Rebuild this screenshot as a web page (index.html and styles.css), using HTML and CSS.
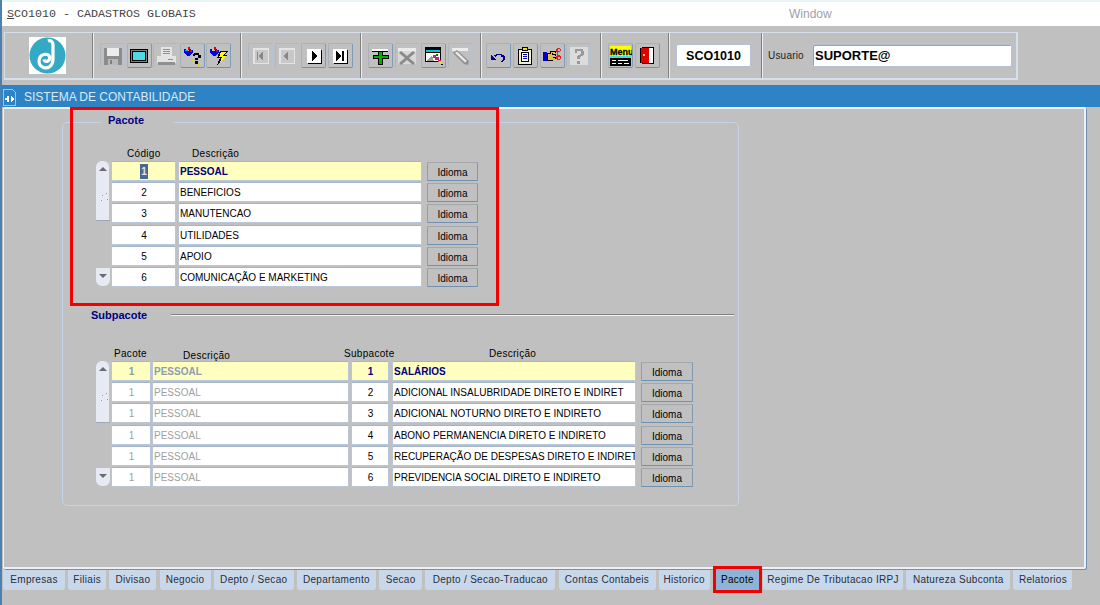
FILE: index.html
```html
<!DOCTYPE html>
<html lang="en">
<head>
    <meta charset="UTF-8">
    <title>SCO1010 - CADASTROS GLOBAIS</title>
    <link rel="stylesheet" href="styles.css">
</head>
<body>

<div class="titlebar">
    <span class="titlebar-text"><u>S</u>CO1010 - CADASTROS GLOBAIS</span>
    <span class="titlebar-menu">Window</span>
</div>

<div class="toolbar">
    <div class="tb-group tb-logo">
        <svg width="37" height="37" viewBox="0 0 37 37">
            <rect width="37" height="37" fill="#fff"/>
            <circle cx="18.5" cy="18.5" r="18" fill="#33a9c4"/>
            <path d="M19 4 C21 3 24 4 24 8 L24 22 C24 29 19 32 14.500 30.500 C8 28 9 19 15 17.500 C19 16.500 21.500 19 20.500 22 C19.500 25 15.500 25 15 22.500" fill="none" stroke="#fff" stroke-width="3.200"/>
        </svg>
    </div>

    <!-- save, screen, print, query -->
    <div class="tb-group tb-save">
        <div class="tb-btn off"><svg width="20" height="20" viewBox="0 0 20 20" shape-rendering="crispEdges"><rect x="1" y="2" width="18" height="17" fill="#8c8c8c"/><rect x="4" y="2" width="12" height="8" fill="#ececec"/><rect x="5" y="13" width="10" height="6" fill="#b8b8b8"/><rect x="7" y="14" width="2" height="4" fill="#808080"/></svg></div>
        <div class="tb-btn"><svg width="20" height="20" viewBox="0 0 20 20" shape-rendering="crispEdges"><rect x="1" y="3" width="18" height="14" fill="#000"/><rect x="2" y="4" width="16" height="12" fill="#808080"/><rect x="3" y="5" width="14" height="10" fill="#000"/><rect x="4" y="6" width="12" height="8" fill="#4fd8e8"/></svg></div>
        <div class="tb-btn off"><svg width="20" height="20" viewBox="0 0 20 20" shape-rendering="crispEdges"><rect x="5" y="1" width="11" height="9" fill="#e4e4e4"/><path d="M7 3h7v1H7zM7 5h7v1H7zM7 7h7v1H7z" fill="#909090"/><rect x="1" y="10" width="19" height="7" fill="#e4e4e4"/><rect x="2" y="16" width="17" height="3" fill="#909090"/><rect x="12" y="13" width="5" height="1" fill="#909090"/></svg></div>
        <div class="tb-btn"><svg width="20" height="20" viewBox="0 0 20 20" shape-rendering="crispEdges"><path d="M2 3h2v2h3V3h2v1h2v2l-4 4H5L2 6z" fill="#0000e0"/><path d="M6 1h2v3H6zM8 4h2v2H8z" fill="#e00000"/><path d="M3 4h3v1H3z" fill="#00b0d0"/><path d="M12 7h5v2h2v3h-3v2h-3v-2h3V9h-3v1h-2V8h1zM13 15h3v3h-3z" fill="#000"/><path d="M10 11h1v1h-1zM10 14h1v1h-1zM11 17h1v1h-1zM17 15h1v1h-1zM18 13h1v1h-1zM16 18h1v1h-1zM18 17h1v1h-1zM9 16h1v1H9z" fill="#f0e000"/></svg></div>
        <div class="tb-btn"><svg width="20" height="20" viewBox="0 0 20 20" shape-rendering="crispEdges"><path d="M1 3h2v2h3V3h2v1h2v2L6 10H4L1 6z" fill="#0000e0"/><path d="M5 1h2v3H5zM7 4h2v2H7z" fill="#e00000"/><path d="M11 5h8l-3 4h3L8 19l3-7H8z" fill="#000"/><path d="M12 6h5l-3 4h3l-6 6 2-5H10z" fill="#ffff00"/></svg></div>
    </div>

    <!-- record navigation -->
    <div class="tb-group tb-a">
        <div class="tb-btn off"><svg width="20" height="20" viewBox="0 0 20 20" shape-rendering="crispEdges"><rect x="2" y="2" width="16" height="16" fill="#e4e4e4"/><rect x="4" y="4" width="13" height="13" fill="#c8c8c8"/><path d="M6 6h1v8H6zM12 6v8h-1v-1h-1v-1H9v-1H8V9h1V8h1V7h1V6z" fill="#888"/></svg></div>
        <div class="tb-btn off"><svg width="20" height="20" viewBox="0 0 20 20" shape-rendering="crispEdges"><rect x="2" y="2" width="16" height="16" fill="#e4e4e4"/><rect x="4" y="4" width="13" height="13" fill="#c8c8c8"/><path d="M11 6v8h-1v-1H9v-1H8v-1H7V9h1V8h1V7h1V6z" fill="#888"/></svg></div>
        <div class="tb-btn"><svg width="20" height="20" viewBox="0 0 20 20" shape-rendering="crispEdges"><rect x="4" y="4" width="14" height="14" fill="#000"/><rect x="3" y="3" width="14" height="14" fill="#fff"/><path d="M8 5v10h1v-1h1v-1h1v-1h1v-1h1V9h-1V8h-1V7h-1V6H9V5z" fill="#000"/></svg></div>
        <div class="tb-btn"><svg width="20" height="20" viewBox="0 0 20 20" shape-rendering="crispEdges"><rect x="4" y="4" width="14" height="14" fill="#000"/><rect x="3" y="3" width="14" height="14" fill="#fff"/><path d="M6 5v10h1v-1h1v-1h1v-1h1v-1h1V9h-1V8H9V7H8V6H7V5zM12 5h2v10h-2z" fill="#000"/></svg></div>
    </div>

    <!-- insert, delete, clear, edit -->
    <div class="tb-group tb-a">
        <div class="tb-btn"><svg width="20" height="20" viewBox="0 0 20 20" shape-rendering="crispEdges"><rect x="1" y="3" width="16" height="2" fill="#fff"/><rect x="1" y="5" width="16" height="1" fill="#000"/><path d="M7 5h5v4h6v4h-6v6H7v-6H2V9h5z" fill="#000"/><path d="M8 6h3v4h6v2h-6v6H8v-6H3v-2h5z" fill="#00b000"/></svg></div>
        <div class="tb-btn off"><svg width="20" height="20" viewBox="0 0 20 20"><rect x="1" y="2" width="18" height="3" fill="#ececec" shape-rendering="crispEdges"/><rect x="1" y="5" width="18" height="13" fill="#d8d8d8" shape-rendering="crispEdges"/><path d="M4 5 L10 10 L16 5 L18 7 L12 12 L18 17 L16 19 L10 14 L4 19 L2 17 L8 12 L2 7 z" fill="#8a8a8a"/></svg></div>
        <div class="tb-btn"><svg width="20" height="20" viewBox="0 0 20 20" shape-rendering="crispEdges"><rect x="1" y="1" width="16" height="15" fill="#000"/><rect x="2" y="4" width="14" height="2" fill="#00c8d8"/><rect x="2" y="7" width="14" height="8" fill="#fff"/><path d="M3 15l5-6 2 6z" fill="#a0a0a0"/><path d="M9 9h3v2h3v3h2v2h-3v-2h-3v-2H9z" fill="#d02070"/><path d="M12 8h2v2h-2z" fill="#008000"/><path d="M15 15h3v3h-3z" fill="#f0e000"/><path d="M17 18h2v1h-2z" fill="#000"/></svg></div>
        <div class="tb-btn off"><svg width="20" height="20" viewBox="0 0 20 20"><rect x="2" y="2" width="16" height="3" fill="#ececec" shape-rendering="crispEdges"/><path d="M3 7 L7 4 L19 15 L18 19 L14 18 z" fill="#909090"/><path d="M5 7 L7 5.500 L17 15 L15 16.500 z" fill="#e8e8e8"/></svg></div>
    </div>

    <!-- undo, list, hand, help -->
    <div class="tb-group tb-c">
        <div class="tb-btn"><svg width="20" height="20" viewBox="0 0 20 20" shape-rendering="crispEdges"><path d="M2 14v-5h1v1h1v1h1v1h1v1h1v1z" fill="#000090"/><path d="M5 9h2V8h6v1h2v1h1v4h-1v1h-1v1h-2v-1h1v-1h1v-3h-2V9H8v1H7v1H6v-1H5z" fill="#000090"/></svg></div>
        <div class="tb-btn"><svg width="20" height="20" viewBox="0 0 20 20" shape-rendering="crispEdges"><rect x="3" y="3" width="14" height="16" fill="#000"/><rect x="4" y="4" width="12" height="14" fill="#f0f0d0"/><rect x="7" y="1" width="6" height="4" fill="#000"/><rect x="8" y="2" width="4" height="2" fill="#f0e000"/><rect x="6" y="6" width="8" height="10" fill="#000"/><rect x="7" y="7" width="6" height="8" fill="#fff"/><path d="M8 8h4v1H8zM8 10h4v1H8zM8 12h4v1H8z" fill="#0000c0"/></svg></div>
        <div class="tb-btn"><svg width="20" height="20" viewBox="0 0 20 20" shape-rendering="crispEdges"><rect x="1" y="6" width="4" height="9" fill="#0000c0"/><path d="M5 7h3V5h6v2h-3v1h3v2h-3v1h3v2h-3v2H5z" fill="#000"/><path d="M6 8h3V6h4v1h-3v2h3v1h-2v2h2v1h-2v1H6z" fill="#e8c040"/><path d="M15 2h3v1h1v2h-1v1h-2v3h2v1h1v3h-1v1h-3v-1h-1v-3h1V6h-1V3h1zM16 3v2h2V3zM16 11v2h2v-2z" fill="#e02020"/></svg></div>
        <div class="tb-btn off"><svg width="20" height="20" viewBox="0 0 20 20" shape-rendering="crispEdges"><rect x="1" y="1" width="18" height="18" fill="#dcdcdc"/><path d="M6 3h8v2h1v4h-1v1h-2v1h-1v2H8v-3h1V9h2V8h1V5H8v2H6V5h0zM8 15h3v3H8z" fill="#999"/></svg></div>
    </div>

    <!-- menu, exit -->
    <div class="tb-group tb-d">
        <div class="tb-btn"><svg width="22" height="22" viewBox="0 0 22 22"><rect x="0" y="1" width="21" height="10" fill="#ffff00"/><text x="0" y="9.500" class="icon-menu-text">Menu</text><rect x="0" y="11" width="21" height="2" fill="#40e0e0" shape-rendering="crispEdges"/><rect x="0" y="13" width="21" height="8" fill="#000" shape-rendering="crispEdges"/><path d="M2 15h4v1H2zM8 15h10v1H8zM2 18h4v1H2zM8 18h4v1H8zM14 18h5v1h-5z" fill="#fff" shape-rendering="crispEdges"/></svg></div>
        <div class="tb-btn"><svg width="20" height="20" viewBox="0 0 20 20" shape-rendering="crispEdges"><rect x="5" y="1" width="12" height="17" fill="#000"/><rect x="12" y="2" width="4" height="15" fill="#fff"/><rect x="3" y="2" width="9" height="15" fill="#e00000"/><rect x="6" y="8" width="2" height="2" fill="#ffff00"/><path d="M3 2h1v15H3z" fill="#000"/></svg></div>
    </div>

    <div class="tb-group tb-form">
        <div class="tb-field tb-field-form">SCO1010</div>
    </div>
    <div class="tb-group tb-user">
        <span class="tb-label">Usuario</span>
        <div class="tb-field tb-field-user">SUPORTE@</div>
    </div>
</div>

<div class="window-title">
    <svg class="window-icon" width="16" height="18" viewBox="0 0 16 18" shape-rendering="crispEdges">
        <path d="M1 1h9l3 3v13H1z" fill="#2e83c4" stroke="#9cc4e4"/>
        <path d="M5 8h2v6H5zM3 10h2v2H3zM9 8h1v6H9zM10 9h1v4h-1zM11 10h1v2h-1z" fill="#fff"/>
    </svg>
    <span>SISTEMA DE CONTABILIDADE</span>
</div>

<div class="panel">
    <div class="mark"></div>

    <div class="frame">
        <div class="legend legend-pacote">Pacote</div>

        <div class="head head-pacote">
            <span class="h-codigo">Código</span>
            <span class="h-descricao">Descrição</span>
        </div>
        <div class="block">
            <div class="scroll">
                <div class="scroll-thumb"><span class="arrow-up"></span><span class="grip"></span></div>
                <div class="scroll-down"><span class="arrow-down"></span></div>
            </div>
            <div class="rows">
                <div class="row"><div class="field code current"><span class="sel">1</span></div><div class="field desc current">PESSOAL</div><div class="idioma">Idioma</div></div>
                <div class="row"><div class="field code">2</div><div class="field desc">BENEFICIOS</div><div class="idioma">Idioma</div></div>
                <div class="row"><div class="field code">3</div><div class="field desc">MANUTENCAO</div><div class="idioma">Idioma</div></div>
                <div class="row"><div class="field code">4</div><div class="field desc">UTILIDADES</div><div class="idioma">Idioma</div></div>
                <div class="row"><div class="field code">5</div><div class="field desc">APOIO</div><div class="idioma">Idioma</div></div>
                <div class="row"><div class="field code">6</div><div class="field desc">COMUNICAÇÃO E MARKETING</div><div class="idioma">Idioma</div></div>
            </div>
        </div>

        <div class="sub-title">
            <span class="legend-sub">Subpacote</span>
            <span class="sub-line"></span>
        </div>

        <div class="head head-sub">
            <span class="h-pacote">Pacote</span>
            <span class="h-desc-a">Descrição</span>
            <span class="h-sub">Subpacote</span>
            <span class="h-desc-b">Descrição</span>
        </div>
        <div class="block">
            <div class="scroll">
                <div class="scroll-thumb thumb-sub"><span class="arrow-up"></span><span class="grip"></span></div>
                <div class="scroll-down"><span class="arrow-down"></span></div>
            </div>
            <div class="rows">
                <div class="row"><div class="field pac current ro">1</div><div class="field desc-a current ro">PESSOAL</div><div class="field sub current">1</div><div class="field desc-b current">SALÁRIOS</div><div class="idioma idioma-sub">Idioma</div></div>
                <div class="row"><div class="field pac ro">1</div><div class="field desc-a ro">PESSOAL</div><div class="field sub">2</div><div class="field desc-b">ADICIONAL INSALUBRIDADE DIRETO E INDIRET</div><div class="idioma idioma-sub">Idioma</div></div>
                <div class="row"><div class="field pac ro">1</div><div class="field desc-a ro">PESSOAL</div><div class="field sub">3</div><div class="field desc-b">ADICIONAL NOTURNO DIRETO E INDIRETO</div><div class="idioma idioma-sub">Idioma</div></div>
                <div class="row"><div class="field pac ro">1</div><div class="field desc-a ro">PESSOAL</div><div class="field sub">4</div><div class="field desc-b">ABONO PERMANENCIA DIRETO E INDIRETO</div><div class="idioma idioma-sub">Idioma</div></div>
                <div class="row"><div class="field pac ro">1</div><div class="field desc-a ro">PESSOAL</div><div class="field sub">5</div><div class="field desc-b">RECUPERAÇÃO DE DESPESAS DIRETO E INDIRET</div><div class="idioma idioma-sub">Idioma</div></div>
                <div class="row"><div class="field pac ro">1</div><div class="field desc-a ro">PESSOAL</div><div class="field sub">6</div><div class="field desc-b">PREVIDENCIA SOCIAL DIRETO E INDIRETO</div><div class="idioma idioma-sub">Idioma</div></div>
            </div>
        </div>
    </div>
</div>

<div class="tabs">
    <div class="tab t-62">Empresas</div>
    <div class="tab t-38">Filiais</div>
    <div class="tab t-47">Divisao</div>
    <div class="tab t-51">Negocio</div>
    <div class="tab t-80">Depto / Secao</div>
    <div class="tab t-79">Departamento</div>
    <div class="tab t-43">Secao</div>
    <div class="tab t-130">Depto / Secao-Traducao</div>
    <div class="tab t-97">Contas Contabeis</div>
    <div class="tab t-51">Historico</div>
    <div class="tab tab-active">Pacote</div>
    <div class="tab t-140">Regime De Tributacao IRPJ</div>
    <div class="tab t-104">Natureza Subconta</div>
    <div class="tab t-59">Relatorios</div>
</div>

</body>
</html>
```

FILE: styles.css
```css
* {
    margin: 0;
    padding: 0;
    box-sizing: border-box;
}

html, body {
    width: 1100px;
    height: 605px;
    overflow: hidden;
}

body {
    position: relative;
    background-color: #c0c0c0;
    border-left: 2px solid #4f7fae;
    font-family: "Liberation Sans", Arial, sans-serif;
    font-size: 10px;
    color: #000;
}

/* title bar */
.titlebar {
    height: 26px;
    margin-left: -2px;
    border-top: 2px solid #e8f5f7;
    background: #fff;
    display: flex;
    align-items: center;
    padding: 0 0 0 7px;
    color: #444;
}

.titlebar-text {
    width: 782px;
    font-family: "Liberation Mono", "Courier New", monospace;
    font-size: 11.670px;
}

.titlebar-menu {
    font-size: 12px;
    color: #a0a0a8;
}

/* toolbar */
.toolbar {
    display: flex;
    width: 1014px;
    height: 48px;
    margin: 6px 0 0 2px;
    border: 1px solid #d6e0ec;
    border-width: 1px 2px 2px 1px;
}

.tb-group {
    display: flex;
    align-items: center;
    height: 100%;
    flex: none;
    padding-left: 7px;
    gap: 1.600px;
    border-right: 1px solid #808080;
    box-shadow: 1px 0 0 #e8eef4;
}

.tb-logo {
    width: 88px;
    padding-left: 24px;
}

.tb-save {
    width: 148px;
}

.tb-a {
    width: 120px;
}

.tb-c {
    width: 120px;
    padding-left: 5px;
    gap: 1.800px;
}

.tb-d {
    width: 68px;
}

.tb-form {
    width: 93px;
}

.tb-user {
    flex: 1;
    padding-left: 6px;
    gap: 0;
    border-right: 0;
    box-shadow: none;
}

.tb-btn {
    width: 25px;
    height: 25px;
    flex: none;
    display: flex;
    align-items: center;
    justify-content: center;
    border: 1px solid;
    border-color: #a8b0b8 #7f9ab4 #6f90b0 #a8b0b8;
    border-radius: 2px;
}

.tb-btn.off {
    border-color: #aeb6be #b4c4d4 #b4c4d4 #aeb6be;
}

.icon-menu-text {
    font-family: "Liberation Sans", Arial, sans-serif;
    font-size: 9px;
    font-weight: bold;
    fill: #000;
    stroke: #000;
    stroke-width: 0.300px;
}

.tb-field {
    height: 23px;
    background: #fff;
    border: 1px solid #b4c2d2;
    border-radius: 2px;
    font-weight: bold;
    display: flex;
    align-items: center;
}

.tb-field-form {
    width: 75px;
    justify-content: center;
    font-size: 12.500px;
}

.tb-label {
    width: 44px;
    font-size: 10px;
    letter-spacing: 0.200px;
    color: #222;
}

.tb-field-user {
    width: 200px;
    padding-left: 2px;
    font-size: 13px;
    box-shadow: inset 1px 1px 0 #9aa0a8;
}

/* blue window caption */
.window-title {
    display: flex;
    align-items: center;
    height: 22px;
    margin-top: 5px;
    background: #2e83c4;
    border-top: 1px solid #4d7699;
    color: #dbe9f4;
    font-size: 12px;
}

.window-icon {
    margin-right: 6px;
}

/* main panel */
.panel {
    position: relative;
    width: 1083px;
    height: 462px;
    margin-left: 1px;
    padding: 13px 0 0 58px;
    border: solid #f0f0f4;
    border-width: 2px 2px 2px 1px;
    border-radius: 2px;
    box-shadow: 1px 1px 0 #6f8fb4;
}

.mark {
    position: absolute;
    left: 66px;
    top: -2px;
    width: 429px;
    height: 199px;
    border: 3px solid #f00000;
    z-index: 10;
}

.frame {
    position: relative;
    width: 677px;
    height: 384px;
    padding-left: 33px;
    border: 1px solid #c4d4e6;
    border-radius: 5px;
}

.legend {
    position: absolute;
    left: 38px;
    top: -9px;
    width: 72px;
    padding-left: 7px;
    background: #c0c0c0;
    font-size: 11px;
    font-weight: bold;
    color: #000080;
}

.head {
    display: flex;
    height: 14px;
    line-height: 14px;
    letter-spacing: 0.300px;
    white-space: nowrap;
}

.head-pacote {
    margin-top: 24px;
}

.h-codigo {
    margin-left: 31px;
    width: 65px;
}

.head-sub {
    margin-top: 25px;
}

.h-pacote {
    margin-left: 18px;
    width: 69px;
}

.h-desc-a {
    width: 161px;
    padding-top: 2px;
}

.h-sub {
    width: 145px;
}

.block {
    display: flex;
}

.scroll {
    display: flex;
    flex-direction: column;
    justify-content: space-between;
    width: 14px;
    height: 125px;
    margin-right: 1px;
}

.scroll-thumb {
    height: 60px;
    background: #e6eaf2;
    border-radius: 6px 6px 0 0;
    border-bottom: 1px solid #9aa8b8;
    box-shadow: inset -1px 0 0 #b8c4d4;
    display: flex;
    flex-direction: column;
    align-items: center;
}

.thumb-sub {
    height: 62px;
}

.arrow-up, .arrow-down {
    width: 0;
    height: 0;
    margin-top: 6px;
    border-left: 4px solid transparent;
    border-right: 4px solid transparent;
}

.arrow-up {
    border-bottom: 4px solid #6a6a70;
}

/* four dots of the thumb grip */
.grip {
    width: 1px;
    height: 1px;
    margin: 24px 2px 0 0;
    background: #8a94a0;
    box-shadow: 4px -2px 0 #8a94a0, 5px 4px 0 #8a94a0, -1px 5px 0 #8a94a0;
}

.scroll-down {
    height: 18px;
    background: #e6eaf2;
    border-radius: 0 0 6px 6px;
    display: flex;
    justify-content: center;
}

.arrow-down {
    border-top: 4px solid #6a6a70;
}

.rows {
    display: flex;
    flex-direction: column;
    gap: 1.200px;
}

.row {
    display: flex;
    height: 20px;
}

.field {
    height: 20px;
    line-height: 20px;
    background: #fff;
    border: 1px solid #b8c6d8;
    border-top-color: #a4b4c8;
    border-radius: 2px;
    padding-left: 1px;
    overflow: hidden;
    white-space: nowrap;
}

.field.current {
    background: #ffffc0;
    font-weight: bold;
    color: #000080;
}

.code {
    width: 65px;
    text-align: center;
}

.desc {
    width: 244px;
    margin-left: 2px;
}

.sel {
    padding: 2px 1px;
    background: #48688f;
    color: #e0e4ea;
}

.pac {
    width: 40px;
    text-align: center;
}

.desc-a {
    width: 197px;
    margin-left: 1px;
}

.sub {
    width: 38px;
    margin-left: 2px;
    text-align: center;
}

.desc-b {
    width: 244px;
    margin-left: 3px;
}

.field.ro {
    color: #a0a0a0;
}

.field.current.ro {
    color: #8c9cb4;
}

.idioma {
    width: 51px;
    height: 19px;
    margin: 1px 0 0 5px;
    line-height: 20px;
    text-align: center;
    border: 1px solid;
    border-color: #a4a8ac #7f98b0 #6f90b0 #989ca0;
    border-radius: 1px;
}

.idioma-sub {
    width: 52px;
}

.sub-title {
    display: flex;
    align-items: center;
    height: 14px;
    margin-top: 21px;
    margin-left: -5px;
}

/* legend of the second block, its line runs on to the right */
.legend-sub {
    width: 80px;
    font-size: 11px;
    font-weight: bold;
    color: #000080;
}

.sub-line {
    width: 563px;
    height: 2px;
    border-top: 1px solid #808080;
    border-bottom: 1px solid #f0f0f0;
}

/* bottom tabs */
.tabs {
    display: flex;
    gap: 3.200px;
    height: 21px;
    margin-left: 1px;
}

.tab {
    height: 21px;
    line-height: 21px;
    text-align: center;
    white-space: nowrap;
    letter-spacing: 0.300px;
    background: #c9d7ea;
    color: #26303c;
    border-radius: 0 0 3px 3px;
}

.t-38 { width: 38px; }
.t-43 { width: 43px; }
.t-47 { width: 47px; }
.t-51 { width: 51px; }
.t-59 { width: 59px; }
.t-62 { width: 62px; }
.t-79 { width: 79px; }
.t-80 { width: 80px; }
.t-97 { width: 97px; }
.t-104 { width: 104px; }
.t-130 { width: 130px; }
.t-140 { width: 140px; }

.tab-active {
    position: relative;
    z-index: 11;
    width: 43px;
    margin: 0 1px 0 3px;
    background: #8fb3d6;
    color: #000;
    border-radius: 0;
    outline: 3px solid #f00000;
}
```
